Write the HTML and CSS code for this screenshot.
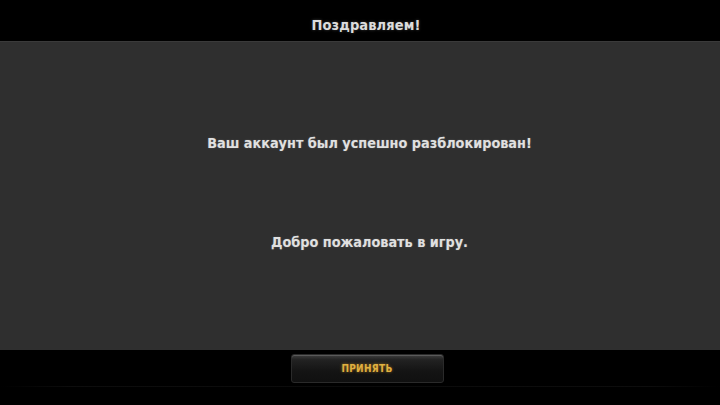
FILE: index.html
```html
<!DOCTYPE html>
<html lang="ru">
<head>
<meta charset="utf-8">
<link rel="stylesheet" href="styles.css">
</head>
<body>
<div class="screen">
  <header class="top">
    <h1 class="title">Поздравляем!</h1>
  </header>
  <main class="panel">
    <p class="msg msg-1">Ваш аккаунт был успешно разблокирован!</p>
    <p class="msg msg-2">Добро пожаловать в игру.</p>
  </main>
  <footer class="bottom">
    <button class="accept">ПРИНЯТЬ</button>
    <div class="faint"></div>
  </footer>
</div>
</body>
</html>
```

FILE: styles.css
```css
html, body {
  margin: 0;
  padding: 0;
  background: #000;
}
.screen {
  width: 720px;
  height: 405px;
  display: flex;
  flex-direction: column;
  background: #000;
  font-family: "DejaVu Sans Condensed", "DejaVu Sans", sans-serif;
  overflow: hidden;
}
.top {
  height: 41px;
  background: #000;
  display: flex;
  justify-content: center;
  align-items: flex-start;
}
.title {
  margin: 0;
  padding-top: 15px;
  padding-left: 12px;
  font-size: 14.5px;
  line-height: 20px;
  font-weight: bold;
  color: #dcdcdc;
  text-shadow: 0 0 3px rgba(255,255,255,0.25);
  letter-spacing: 0.1px;
}
.panel {
  height: 309px;
  background: #2f2f2f;
  border-top: 1px solid #3a3a3a;
  box-sizing: border-box;
  display: flex;
  flex-direction: column;
  align-items: center;
}
.msg {
  margin: 0;
  font-size: 14.3px;
  line-height: 20px;
  font-weight: bold;
  color: #e0e0e0;
  text-shadow: 0 0 2px rgba(255,255,255,0.2);
  padding-left: 19px;
}
.msg-1 { margin-top: 91px; }
.msg-2 { margin-top: 79px; }
.bottom {
  flex: 1;
  background: #000;
  display: flex;
  flex-direction: column;
  align-items: center;
  padding-top: 4px;
  box-sizing: border-box;
}
.accept {
  margin-left: 14px;
  width: 153px;
  height: 29px;
  border-radius: 3px;
  border: 1px solid #2a2a2a;
  background: linear-gradient(#3e3e3e 0%, #222 18%, #141414 60%, #101010 100%);
  box-shadow: inset 0 1px 0 #5a5a5a, 0 0 2px #000;
  color: #e0b040;
  font-family: "DejaVu Sans Condensed", "DejaVu Sans", sans-serif;
  font-weight: bold;
  font-size: 10px;
  letter-spacing: 0.3px;
  text-shadow: 0 0 3px rgba(230,170,40,0.6);
  padding: 0;
}
.faint {
  width: 720px;
  height: 1px;
  margin-top: 3px;
  background: linear-gradient(90deg, transparent 0%, #0d0d0d 10%, #0b0b0b 50%, #0d0d0d 90%, transparent 100%);
}
```
